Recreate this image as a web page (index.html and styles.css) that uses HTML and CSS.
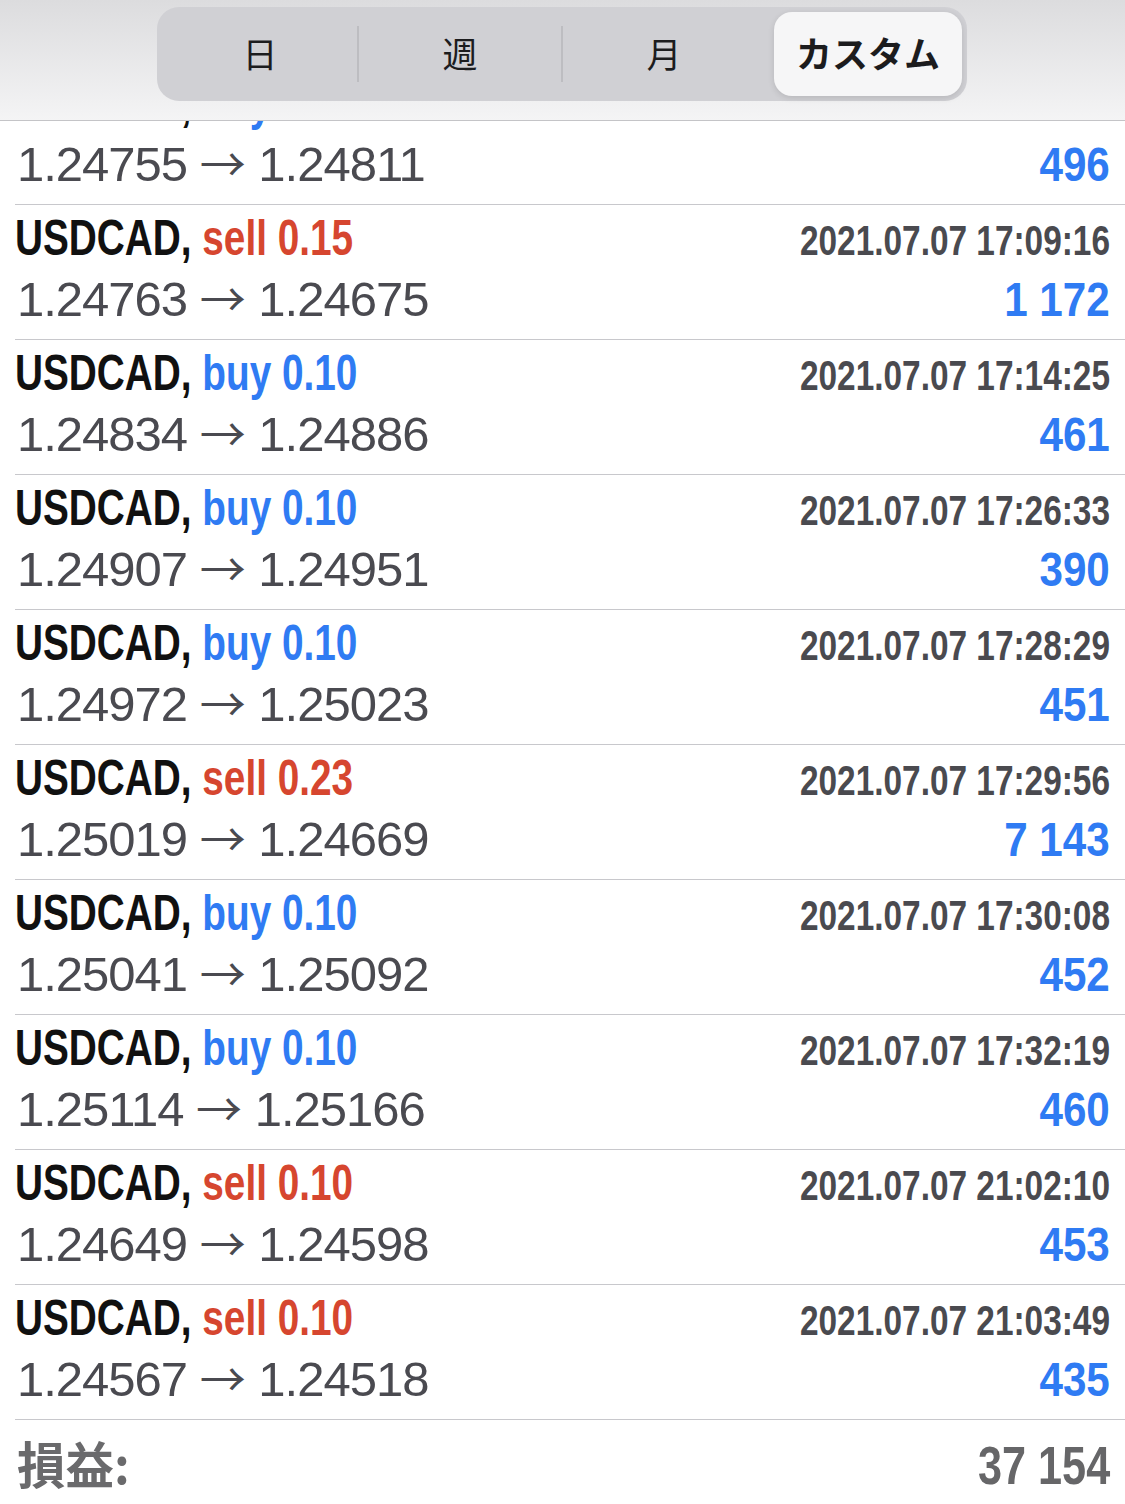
FILE: index.html
```html
<!DOCTYPE html>
<html lang="ja">
<head>
    <meta charset="UTF-8">
    <meta name="viewport" content="width=device-width, initial-scale=1.0">
    <title>履歴</title>
    <link rel="stylesheet" href="styles.css">
</head>
<body>
    <div class="screen">
        <div class="topbar">
            <div class="segments">
                <div class="segment">日</div>
                <div class="segment">週</div>
                <div class="segment">月</div>
                <div class="segment active">カスタム</div>
            </div>
        </div>

        <div class="deal-list" id="dealList"></div>

        <div class="summary">
            <span class="summary-label">損益:</span>
            <span class="summary-value">37 154</span>
        </div>
    </div>

    <script>
        const deals = [
            { side: 'buy', lots: '0.10', open: '1.24755', close: '1.24811', time: '2021.07.07 17:05:02', profit: '496' },
            { side: 'sell', lots: '0.15', open: '1.24763', close: '1.24675', time: '2021.07.07 17:09:16', profit: '1 172' },
            { side: 'buy', lots: '0.10', open: '1.24834', close: '1.24886', time: '2021.07.07 17:14:25', profit: '461' },
            { side: 'buy', lots: '0.10', open: '1.24907', close: '1.24951', time: '2021.07.07 17:26:33', profit: '390' },
            { side: 'buy', lots: '0.10', open: '1.24972', close: '1.25023', time: '2021.07.07 17:28:29', profit: '451' },
            { side: 'sell', lots: '0.23', open: '1.25019', close: '1.24669', time: '2021.07.07 17:29:56', profit: '7 143' },
            { side: 'buy', lots: '0.10', open: '1.25041', close: '1.25092', time: '2021.07.07 17:30:08', profit: '452' },
            { side: 'buy', lots: '0.10', open: '1.25114', close: '1.25166', time: '2021.07.07 17:32:19', profit: '460' },
            { side: 'sell', lots: '0.10', open: '1.24649', close: '1.24598', time: '2021.07.07 21:02:10', profit: '453' },
            { side: 'sell', lots: '0.10', open: '1.24567', close: '1.24518', time: '2021.07.07 21:03:49', profit: '435' }
        ];

        const dealList = document.getElementById('dealList');

        deals.forEach(deal => {
            const row = document.createElement('div');
            row.classList.add('deal');
            row.innerHTML = `
                <div class="deal-line">
                    <span class="deal-title"><span class="symbol">USDCAD,</span> <span class="${deal.side}">${deal.side} ${deal.lots}</span></span>
                    <span class="deal-time">${deal.time}</span>
                </div>
                <div class="deal-line">
                    <span class="deal-prices">${deal.open} <span class="arrow">→</span> ${deal.close}</span>
                    <span class="deal-profit">${deal.profit}</span>
                </div>
            `;
            dealList.appendChild(row);
        });
    </script>
</body>
</html>
```

FILE: styles.css
```css
body {
    margin: 0;
    background: #ffffff;
    font-family: "Liberation Sans", Arial, sans-serif;
    overflow: hidden;
}

.screen {
    position: relative;
    width: 1125px;
    height: 1504px;
    overflow: hidden;
    background: #ffffff;
}

/* segmented control bar, lies over the scrolled list */
.topbar {
    position: absolute;
    top: 0;
    left: 0;
    right: 0;
    height: 120px;
    background: linear-gradient(#dcdcde, #f4f4f5);
    border-bottom: 1px solid #c4c4c7;
    z-index: 2;
}

.segments {
    display: flex;
    width: 800px;
    height: 84px;
    margin: 7px 0 0 157px;
    padding: 5px;
    border-radius: 22px;
    background: #d0d0d4;
}

.segment {
    width: 204px;
    display: flex;
    align-items: center;
    justify-content: center;
    padding-bottom: 4px;
    box-sizing: border-box;
    font-family: "Noto Sans CJK JP", sans-serif;
    font-size: 35px;
    color: #1c1c1e;
    position: relative;
}

.segment:first-child {
    width: 196px;
}

.segment + .segment::before {
    content: "";
    position: absolute;
    left: -1px;
    top: 14px;
    bottom: 14px;
    width: 2px;
    background: #bdbdc1;
}

.segment.active {
    width: 188px;
    margin-left: 8px;
    background: #f6f6f7;
    border-radius: 18px;
    box-shadow: 0 2px 6px rgba(0,0,0,0.12);
    font-weight: bold;
    font-size: 36px;
}

.segment.active::before {
    display: none;
}

.deal-list {
    padding-top: 70px;
}

.deal {
    margin-left: 15px;
    padding: 4px 15px 0 0;
    height: 130px;
    border-bottom: 1px solid #c8c8cc;
}

.deal-line {
    display: flex;
    justify-content: space-between;
    align-items: baseline;
    height: 62px;
}

/* the app uses a condensed bold face; squeeze Liberation Sans to match */
.deal-title {
    font-weight: bold;
    font-size: 50px;
    color: #111111;
    white-space: nowrap;
    transform: scaleX(0.775);
    transform-origin: left center;
}

.sell {
    color: #d6462f;
}

.buy {
    color: #2f7bf3;
}

.deal-time {
    font-weight: bold;
    font-size: 42px;
    color: #4a4a4f;
    white-space: nowrap;
    transform: scaleX(0.795);
    transform-origin: right center;
}

.deal-prices {
    padding-left: 2px;
    font-size: 49px;
    line-height: 56px;
    letter-spacing: -1px;
    color: #4a4a50;
    white-space: nowrap;
}

.arrow {
    font-family: "Noto Sans CJK JP", sans-serif;
    font-size: 46px;
    line-height: 1;
    letter-spacing: 0;
}

.deal-profit {
    font-weight: bold;
    font-size: 49px;
    color: #2f7bf3;
    white-space: nowrap;
    transform: scaleX(0.86);
    transform-origin: right center;
}

.summary {
    display: flex;
    justify-content: space-between;
    align-items: baseline;
    margin-left: 15px;
    padding: 6px 15px 0 2px;
}

.summary-label {
    font-family: "Noto Sans CJK JP", sans-serif;
    font-weight: bold;
    font-size: 50px;
    color: #6a6a6c;
    transform: scaleX(0.97);
    transform-origin: left center;
}

.summary-value {
    font-weight: bold;
    font-size: 54px;
    color: #666668;
    white-space: nowrap;
    transform: scaleX(0.8);
    transform-origin: right center;
}
```
